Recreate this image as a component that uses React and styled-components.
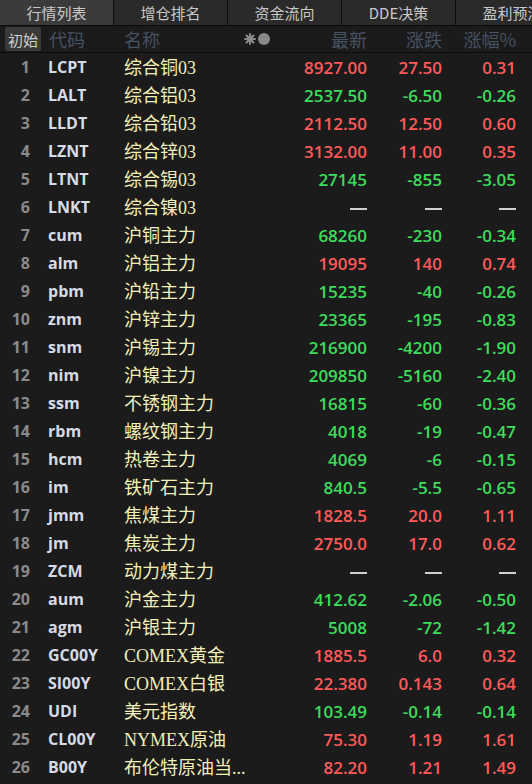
import styled, { createGlobalStyle } from "styled-components";

const GlobalStyle = createGlobalStyle`
  html, body {
    margin: 0;
    padding: 0;
    background: #1b1b1b;
  }
  * { box-sizing: border-box; }
`;

const colors = {
  bg: "#1b1b1b",
  red: "#ff5a5a",
  green: "#3ddc5c",
  flat: "#d0d0d0",
  name: "#f2f0b8",
  code: "#d6dae4",
  idx: "#8a8a8a",
  head: "#465161",
};

const rows = [
  ["LCPT", "综合铜03", "8927.00", "27.50", "0.31"],
  ["LALT", "综合铝03", "2537.50", "-6.50", "-0.26"],
  ["LLDT", "综合铅03", "2112.50", "12.50", "0.60"],
  ["LZNT", "综合锌03", "3132.00", "11.00", "0.35"],
  ["LTNT", "综合锡03", "27145", "-855", "-3.05"],
  ["LNKT", "综合镍03", null, null, null],
  ["cum", "沪铜主力", "68260", "-230", "-0.34"],
  ["alm", "沪铝主力", "19095", "140", "0.74"],
  ["pbm", "沪铅主力", "15235", "-40", "-0.26"],
  ["znm", "沪锌主力", "23365", "-195", "-0.83"],
  ["snm", "沪锡主力", "216900", "-4200", "-1.90"],
  ["nim", "沪镍主力", "209850", "-5160", "-2.40"],
  ["ssm", "不锈钢主力", "16815", "-60", "-0.36"],
  ["rbm", "螺纹钢主力", "4018", "-19", "-0.47"],
  ["hcm", "热卷主力", "4069", "-6", "-0.15"],
  ["im", "铁矿石主力", "840.5", "-5.5", "-0.65"],
  ["jmm", "焦煤主力", "1828.5", "20.0", "1.11"],
  ["jm", "焦炭主力", "2750.0", "17.0", "0.62"],
  ["ZCM", "动力煤主力", null, null, null],
  ["aum", "沪金主力", "412.62", "-2.06", "-0.50"],
  ["agm", "沪银主力", "5008", "-72", "-1.42"],
  ["GC00Y", "COMEX黄金", "1885.5", "6.0", "0.32"],
  ["SI00Y", "COMEX白银", "22.380", "0.143", "0.64"],
  ["UDI", "美元指数", "103.49", "-0.14", "-0.14"],
  ["CL00Y", "NYMEX原油", "75.30", "1.19", "1.61"],
  ["B00Y", "布伦特原油当...", "82.20", "1.21", "1.49"],
];

const tabs = ["行情列表", "增仓排名", "资金流向", "DDE决策", "盈利预测"];

const Page = styled.div`
  width: 532px;
  height: 784px;
  overflow: hidden;
  background: ${colors.bg};
`;

const TabBar = styled.div`
  display: flex;
  height: 26px;
  border-bottom: 1px solid #0b0b0b;
  overflow: hidden;
`;

const Tab = styled.div`
  flex: 0 0 114px;
  display: flex;
  align-items: center;
  justify-content: center;
  background: ${(p) => (p.$active ? "#3b3b3b" : "#2a2a2a")};
  border-right: 1px solid #0e0e0e;
  color: #c9c9c9;
  font-family: "Noto Sans CJK SC", sans-serif;
  font-size: 15px;
  white-space: nowrap;
`;

const cols = "30px 94px 166px 77px 75px 74px";

const HeadRow = styled.div`
  display: grid;
  grid-template-columns: ${cols};
  align-items: center;
  height: 27px;
  border-bottom: 1px solid #0b0b0b;
  font-family: "Noto Sans CJK SC", sans-serif;
  font-size: 18px;
  color: ${colors.head};
`;

const HeadLeft = styled.div`
  grid-column: 1 / span 2;
  display: flex;
  align-items: center;
  gap: 8px;
  padding-left: 5px;
`;

const InitButton = styled.div`
  width: 36px;
  height: 24px;
  display: flex;
  align-items: center;
  justify-content: center;
  background: #3a3a3a;
  border-radius: 2px;
  color: #cfcfcf;
  font-size: 15px;
`;

const HeadName = styled.div`
  display: flex;
  align-items: center;
  justify-content: space-between;
  padding-right: 18px;
`;

const HeadNum = styled.div`
  text-align: right;
`;

const Row = styled.div`
  display: grid;
  grid-template-columns: ${cols};
  align-items: center;
  height: 28px;
`;

const Idx = styled.div`
  text-align: right;
  font-family: "Open Sans", sans-serif;
  font-weight: 700;
  font-size: 16px;
  color: ${colors.idx};
`;

const Code = styled.div`
  padding-left: 18px;
  font-family: "Open Sans", sans-serif;
  font-weight: 700;
  font-size: 16px;
  color: ${colors.code};
`;

const Name = styled.div`
  padding-bottom: 3px;
  font-family: "Liberation Serif", "Noto Sans CJK SC", serif;
  font-size: 18px;
  color: ${colors.name};
  white-space: nowrap;
  overflow: hidden;
`;

const Num = styled.div`
  text-align: right;
  font-family: "Open Sans", sans-serif;
  font-weight: 600;
  font-size: 17px;
  color: ${(p) => p.$color};
`;

const Dash = styled.span`
  display: inline-block;
  width: 17px;
  height: 2px;
  background: ${colors.flat};
  vertical-align: middle;
`;

const SortIcons = () => (
  <svg width="28" height="14" viewBox="0 0 28 14">
    <g stroke="#8a8a8a" strokeWidth="2" strokeLinecap="round">
      <line x1="6" y1="2" x2="6" y2="12" />
      <line x1="1" y1="7" x2="11" y2="7" />
      <line x1="2.5" y1="3.5" x2="9.5" y2="10.5" />
      <line x1="9.5" y1="3.5" x2="2.5" y2="10.5" />
    </g>
    <circle cx="6" cy="7" r="3.2" fill="#8a8a8a" />
    <circle cx="20" cy="7" r="6" fill="#8a8a8a" />
  </svg>
);

const colorOf = (chg) => {
  if (chg == null) return colors.flat;
  return chg.startsWith("-") ? colors.green : colors.red;
};

const Cell = ({ value, color }) => (
  <Num $color={color}>{value == null ? <Dash /> : value}</Num>
);

const App = () => (
  <Page>
    <GlobalStyle />
    <TabBar>
      {tabs.map((t, i) => (
        <Tab key={t} $active={i === 0}>
          {t}
        </Tab>
      ))}
    </TabBar>
    <HeadRow>
      <HeadLeft>
        <InitButton>初始</InitButton>
        代码
      </HeadLeft>
      <HeadName>
        名称
        <SortIcons />
      </HeadName>
      <HeadNum>最新</HeadNum>
      <HeadNum>涨跌</HeadNum>
      <HeadNum>涨幅%</HeadNum>
    </HeadRow>
    {rows.map(([code, name, last, chg, pct], i) => {
      const c = colorOf(chg);
      return (
        <Row key={code}>
          <Idx>{i + 1}</Idx>
          <Code>{code}</Code>
          <Name>{name}</Name>
          <Cell value={last} color={c} />
          <Cell value={chg} color={c} />
          <Cell value={pct} color={c} />
        </Row>
      );
    })}
  </Page>
);

export default App;
